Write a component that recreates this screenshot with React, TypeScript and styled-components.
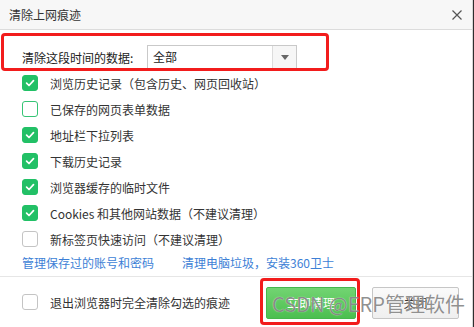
import styled, { createGlobalStyle } from 'styled-components'

const GlobalStyle = createGlobalStyle`
  html, body {
    margin: 0;
    padding: 0;
    background: #2e2e2e;
  }
  body {
    font-family: "Microsoft YaHei", "Noto Sans CJK SC", "Noto Sans", sans-serif;
    font-size: 12px;
    color: #333;
  }
`

const Dialog = styled.div`
  position: relative;
  width: 472px;
  height: 327px;
  background: #fff;
  border-right: 1px solid #d6d6d6;
  display: flex;
  flex-direction: column;
  overflow: hidden;
`

const TitleBar = styled.div`
  height: 29px;
  flex-shrink: 0;
  background: #f7f7f7;
  border-bottom: 1px solid #dcdcdc;
  display: flex;
  align-items: center;
  justify-content: space-between;
  padding: 0 9px;
  font-size: 12px;
  color: #333;
`

const CloseIcon = styled.svg`
  width: 10px;
  height: 10px;
  margin-right: 1px;
`

const Body = styled.div`
  display: flex;
  flex-direction: column;
  padding: 0 13px 0 22px;
`

const RangeRow = styled.div`
  height: 24px;
  margin-top: 15px;
  display: flex;
  align-items: center;
  gap: 10px;
`

const RangeLabel = styled.span`
  font-size: 12px;
  color: #222;
  width: 115px;
`

const Select = styled.div`
  width: 148px;
  height: 22px;
  border: 1px solid #c9c9c9;
  display: flex;
  align-items: stretch;
  background: #fff;
`

const SelectValue = styled.span`
  flex: 1;
  padding-left: 5px;
  line-height: 22px;
  color: #222;
`

const SelectArrow = styled.span`
  width: 23px;
  border-left: 1px solid #dcdcdc;
  background: #f6f6f6;
  display: flex;
  align-items: center;
  justify-content: center;

  &::after {
    content: '';
    border-left: 4px solid transparent;
    border-right: 4px solid transparent;
    border-top: 5px solid #666;
  }
`

const OptionList = styled.div`
  margin-top: 1px;
  display: flex;
  flex-direction: column;
`

const Option = styled.label`
  height: 26px;
  display: flex;
  align-items: center;
  gap: 12px;
  color: #333;
`

const Box = styled.span<{ $checked?: boolean; $hover?: boolean }>`
  width: 16px;
  height: 16px;
  box-sizing: border-box;
  border-radius: 3px;
  flex-shrink: 0;
  display: flex;
  align-items: center;
  justify-content: center;
  background: ${(p) => (p.$checked ? '#22c066' : '#fff')};
  border: 1px solid
    ${(p) => (p.$checked ? '#22c066' : p.$hover ? '#36c475' : '#c4c4c4')};

  svg {
    width: 10px;
    height: 10px;
  }
`

const Links = styled.div`
  height: 20px;
  margin-bottom: 4px;
  display: flex;
  align-items: center;
  gap: 28px;
`

const Link = styled.a`
  color: #3d7fd6;
  text-decoration: none;
  cursor: pointer;
`

const Divider = styled.div`
  height: 1px;
  background: #e6e6e6;
`

const Footer = styled.div`
  height: 50px;
  display: flex;
  align-items: center;
  padding: 0 13px 0 22px;
  gap: 12px;
`

const FooterText = styled.span`
  flex: 1;
`

const Buttons = styled.div`
  display: flex;
  gap: 16px;
  margin-top: 1px;
`

const Button = styled.button<{ $primary?: boolean }>`
  width: ${(p) => (p.$primary ? '90px' : '87px')};
  height: 32px;
  border-radius: 2px;
  font-family: inherit;
  font-size: 12px;
  cursor: pointer;
  color: ${(p) => (p.$primary ? '#fff' : '#333')};
  border: 1px solid ${(p) => (p.$primary ? '#45b84c' : '#c6c6c6')};
  background: ${(p) =>
    p.$primary
      ? 'linear-gradient(#72d472, #4cbf50)'
      : 'linear-gradient(#fafafa, #efefef)'};
`

const Highlight = styled.div<{ $x: number; $y: number; $w: number; $h: number }>`
  position: absolute;
  left: ${(p) => p.$x}px;
  top: ${(p) => p.$y}px;
  width: ${(p) => p.$w}px;
  height: ${(p) => p.$h}px;
  box-sizing: border-box;
  border: 3px solid #f21c1c;
  border-radius: 4px;
  pointer-events: none;
`

const Watermark = styled.span`
  position: absolute;
  left: 272px;
  top: 294px;
  font-family: "Noto Sans CJK SC", sans-serif;
  font-size: 20px;
  line-height: 20px;
  color: rgba(95, 95, 95, 0.7);
  text-shadow: 0 0 1px rgba(255, 255, 255, 0.9);
  white-space: nowrap;
  pointer-events: none;
`

const options = [
  { text: '浏览历史记录（包含历史、网页回收站）', checked: true },
  { text: '已保存的网页表单数据', checked: false, hover: true },
  { text: '地址栏下拉列表', checked: true },
  { text: '下载历史记录', checked: true },
  { text: '浏览器缓存的临时文件', checked: true },
  { text: 'Cookies 和其他网站数据（不建议清理）', checked: true },
  { text: '新标签页快速访问（不建议清理）', checked: false },
]

function Check({ checked, hover }: { checked?: boolean; hover?: boolean }) {
  return (
    <Box $checked={checked} $hover={hover}>
      {checked && (
        <svg viewBox="0 0 10 10">
          <path
            d="M1.6 5.2 L4 7.5 L8.5 2.6"
            fill="none"
            stroke="#fff"
            strokeWidth="1.7"
            strokeLinecap="round"
            strokeLinejoin="round"
          />
        </svg>
      )}
    </Box>
  )
}

export default function App() {
  return (
    <>
      <GlobalStyle />
      <Dialog>
        <TitleBar>
          <span>清除上网痕迹</span>
          <CloseIcon viewBox="0 0 10 10">
            <path d="M0.5 0.5 L9.5 9.5 M9.5 0.5 L0.5 9.5" stroke="#555" strokeWidth="1.2" />
          </CloseIcon>
        </TitleBar>
        <Body>
          <RangeRow>
            <RangeLabel>清除这段时间的数据:</RangeLabel>
            <Select>
              <SelectValue>全部</SelectValue>
              <SelectArrow />
            </Select>
          </RangeRow>
          <OptionList>
            {options.map((o) => (
              <Option key={o.text}>
                <Check checked={o.checked} hover={o.hover} />
                {o.text}
              </Option>
            ))}
          </OptionList>
          <Links>
            <Link>管理保存过的账号和密码</Link>
            <Link>清理电脑垃圾，安装360卫士</Link>
          </Links>
        </Body>
        <Divider />
        <Footer>
          <Check />
          <FooterText>退出浏览器时完全清除勾选的痕迹</FooterText>
          <Buttons>
            <Button $primary>立即清理</Button>
            <Button>关闭</Button>
          </Buttons>
        </Footer>
        <Highlight $x={1} $y={33} $w={328} $h={38} />
        <Highlight $x={260} $y={278} $w={100} $h={47} />
        <Watermark>CSDN @ERP管理软件</Watermark>
      </Dialog>
    </>
  )
}
